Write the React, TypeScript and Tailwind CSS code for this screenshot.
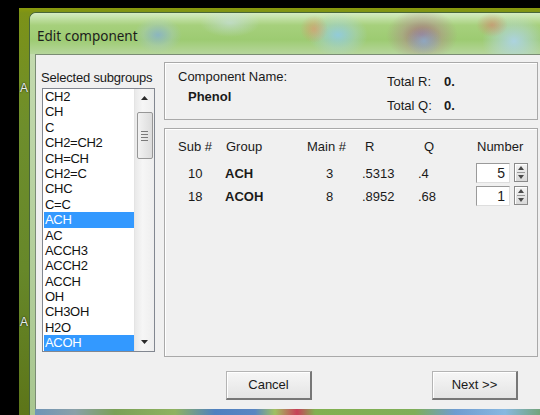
const subgroups = [
  "CH2",
  "CH",
  "C",
  "CH2=CH2",
  "CH=CH",
  "CH2=C",
  "CHC",
  "C=C",
  "ACH",
  "AC",
  "ACCH3",
  "ACCH2",
  "ACCH",
  "OH",
  "CH3OH",
  "H2O",
  "ACOH",
];
const picked = ["ACH", "ACOH"];

const rows = [
  { sub: 10, group: "ACH", main: 3, r: ".5313", q: ".4", n: 5 },
  { sub: 18, group: "ACOH", main: 8, r: ".8952", q: ".68", n: 1 },
];

function Tri({ up }: { up?: boolean }) {
  return (
    <svg width="7" height="4" viewBox="0 0 7 4">
      <path d={up ? "M0 4 L3.5 0 L7 4 Z" : "M0 0 L3.5 4 L7 0 Z"} fill="#2a2a2a" />
    </svg>
  );
}

function Spinner() {
  return (
    <div className="flex h-[19px] w-[14px] flex-col items-center justify-center gap-[2px] border border-[#8a8a8a] bg-[linear-gradient(180deg,#f4f4f4,#d9d9d9)] shadow-[inset_1px_1px_0_#fff]">
      <svg width="6" height="4" viewBox="0 0 6 4">
        <path d="M0 4 L3 0 L6 4 Z" fill="#4a4a4a" />
      </svg>
      <div className="h-px w-[8px] bg-[#9a9a9a]" />
      <svg width="6" height="4" viewBox="0 0 6 4">
        <path d="M0 0 L3 4 L6 0 Z" fill="#4a4a4a" />
      </svg>
    </div>
  );
}

function Button({ label, className }: { label: string; className?: string }) {
  return (
    <button
      className={
        "h-[29px] w-[86px] border border-[#b4b4b4] border-r-2 border-b-2 border-r-[#777] border-b-[#777] bg-[linear-gradient(180deg,#f6f6f6,#e4e4e4)] text-[13px] text-[#1a1a1a] shadow-[inset_1px_1px_0_#fff] " +
        (className ?? "")
      }
    >
      {label}
    </button>
  );
}

export default function App() {
  return (
    <div className="flex h-[415px] w-[540px] overflow-hidden bg-black pt-[8px] pl-[19px] font-['Liberation_Sans',Arial,sans-serif]">
      {/* desktop behind the dialog */}
      <div className="relative flex flex-1 bg-[linear-gradient(180deg,#8a9a0c_0px,#7c9218_5px,#6e8e2c_120px,#67882a_260px,#5c7418_415px)] pt-[4px] pl-[10px]">
        <span className="absolute top-[71px] left-[1px] text-[12px] text-[#e8eef0] [text-shadow:0_0_2px_#000]">A</span>
        <span className="absolute top-[305px] left-[1px] text-[12px] text-[#e8eef0] [text-shadow:0_0_2px_#000]">A</span>

        {/* window */}
        <div className="flex w-[530px] flex-col overflow-hidden rounded-tl-[7px] border-t border-l border-[#48663a] bg-[linear-gradient(180deg,#c6dcb2,#b3cf9b_60%,#a8c690)]">
          <div className="flex h-[41px] items-center pt-[5px] pl-[7px] bg-[radial-gradient(ellipse_24px_18px_at_128px_22px,#86b0d2cc_0%,#a6c6d455_60%,transparent_100%),radial-gradient(ellipse_30px_14px_at_200px_10px,#cadfe899_0%,transparent_100%),radial-gradient(ellipse_14px_14px_at_284px_16px,#e4906a99_0%,transparent_100%),radial-gradient(ellipse_30px_22px_at_308px_22px,#90cbe8dd_0%,#a6d3dc66_60%,transparent_100%),radial-gradient(ellipse_18px_14px_at_394px_28px,#8aaed0cc_0%,transparent_100%),radial-gradient(ellipse_36px_26px_at_392px_22px,#a05a7acc_0%,#b07c8c66_55%,transparent_100%),radial-gradient(ellipse_16px_12px_at_462px_12px,#d4806a99_0%,transparent_100%),radial-gradient(ellipse_32px_26px_at_484px_28px,#aed4f0dd_0%,#b6d8e666_60%,transparent_100%),linear-gradient(180deg,#d6ecc2_0%,#a6d07c_30%,#9dcb72_65%,#b6d69c_100%)]">
            <span className="font-['Noto_Sans',sans-serif] text-[13.5px] text-[#1c1c1c]">Edit component</span>
          </div>

          {/* client area */}
          <div className="flex flex-1 pl-[5px]">
            <div className="flex flex-1 border-t border-l border-[#7a8c74] bg-[#f0f0f0] pt-[7px] text-[13px] text-[#1a1a1a]">
              {/* subgroup list */}
              <div className="flex w-[128px] flex-none flex-col pl-[5px]">
                <div className="mt-[8px] h-[15px] leading-[15px] tracking-[-0.2px]">Selected subgroups</div>
                <div className="mt-[3px] ml-px flex h-[264px] w-[113px] border border-[#828790] bg-white">
                  <div className="w-[91px] flex-none pl-px">
                    {subgroups.map((s) => (
                      <div
                        key={s}
                        className={
                          "h-[15.4px] pl-px leading-[15.4px] tracking-[-0.3px] " +
                          (picked.includes(s) ? "bg-[#3399ff] text-white" : "text-[#111]")
                        }
                      >
                        {s}
                      </div>
                    ))}
                  </div>
                  <div className="flex flex-1 flex-col items-center border-l border-[#e4e4e4] bg-[linear-gradient(90deg,#e9e9e9,#f6f6f6_40%,#eeeeee)]">
                    <div className="flex h-[17px] items-center justify-center">
                      <Tri up />
                    </div>
                    <div className="mt-[6px] flex h-[47px] w-[16px] flex-col items-center justify-center gap-[2px] rounded-[2px] border border-[#979797] bg-[linear-gradient(90deg,#f2f2f2,#dcdcdc)]">
                      <div className="h-px w-[7px] bg-[#7a7a7a]" />
                      <div className="h-px w-[7px] bg-[#7a7a7a]" />
                      <div className="h-px w-[7px] bg-[#7a7a7a]" />
                      <div className="h-px w-[7px] bg-[#7a7a7a]" />
                    </div>
                    <div className="mt-auto mb-[7px] flex items-center justify-center">
                      <Tri />
                    </div>
                  </div>
                </div>
              </div>

              {/* component details */}
              <div className="flex flex-1 flex-col">
                <div className="flex h-[58px] w-[374px] border border-[#a9a9a9] shadow-[inset_1px_1px_0_#fff]">
                  <div className="w-[222px] pt-[6px] pl-[13px] leading-[16px]">
                    <div>Component Name:</div>
                    <div className="mt-[4px] pl-[10px] font-bold">Phenol</div>
                  </div>
                  <div className="grid grid-cols-[57px_auto] gap-y-[2px] pt-[11px] leading-[16px]">
                    <span>Total R:</span>
                    <span className="font-bold">0.</span>
                    <span>Total Q:</span>
                    <span className="font-bold">0.</span>
                  </div>
                </div>

                <div className="mt-[8px] h-[229px] w-[374px] border border-[#a9a9a9] pt-[10px] pl-[13px] shadow-[inset_1px_1px_0_#fff]">
                  <div className="grid h-[16px] grid-cols-[47px_80px_55px_56px_60px_auto] leading-[16px]">
                    <span>Sub #</span>
                    <span className="pl-px">Group</span>
                    <span className="pl-[2px]">Main #</span>
                    <span className="pl-[5px]">R</span>
                    <span className="pl-[8px]">Q</span>
                    <span className="pl-px">Number</span>
                  </div>
                  <div className="mt-[7px] flex flex-col gap-[3px]">
                    {rows.map((r) => (
                      <div key={r.sub} className="grid h-[20px] grid-cols-[47px_80px_55px_56px_60px_auto] items-center">
                        <span className="pt-[2px] pl-[10px]">{r.sub}</span>
                        <span className="pt-[2px] font-bold">{r.group}</span>
                        <span className="pt-[2px] pl-[21px]">{r.main}</span>
                        <span className="pt-[2px] pl-[2px]">{r.r}</span>
                        <span className="pt-[2px] pl-[2px]">{r.q}</span>
                        <div className="flex items-center gap-[4px]">
                          <div className="h-[20px] w-[34px] border border-[#9a9a9a] border-r-[#dedede] border-b-[#dedede] bg-white pr-[4px] text-right text-[14px] leading-[18px]">
                            {r.n}
                          </div>
                          <Spinner />
                        </div>
                      </div>
                    ))}
                  </div>
                </div>

                <div className="mt-[14px] flex">
                  <Button label="Cancel" className="ml-[62px]" />
                  <Button label="Next >>" className="ml-[120px]" />
                </div>
              </div>
            </div>
          </div>

          {/* lower frame edge */}
          <div className="ml-[5px] h-[6px] bg-[linear-gradient(90deg,#6f94b6_0px,#8aa0a8_40px,#7aa056_80px,#8fb260_140px,#4f80c0_180px,#5a86c2_220px,#a0c060_240px,#c84058_262px,#82b050_280px,#7fae58_380px,#6f9cd0_420px,#88b8e0_470px,#6a9a50_520px)]" />
        </div>
      </div>
    </div>
  );
}
